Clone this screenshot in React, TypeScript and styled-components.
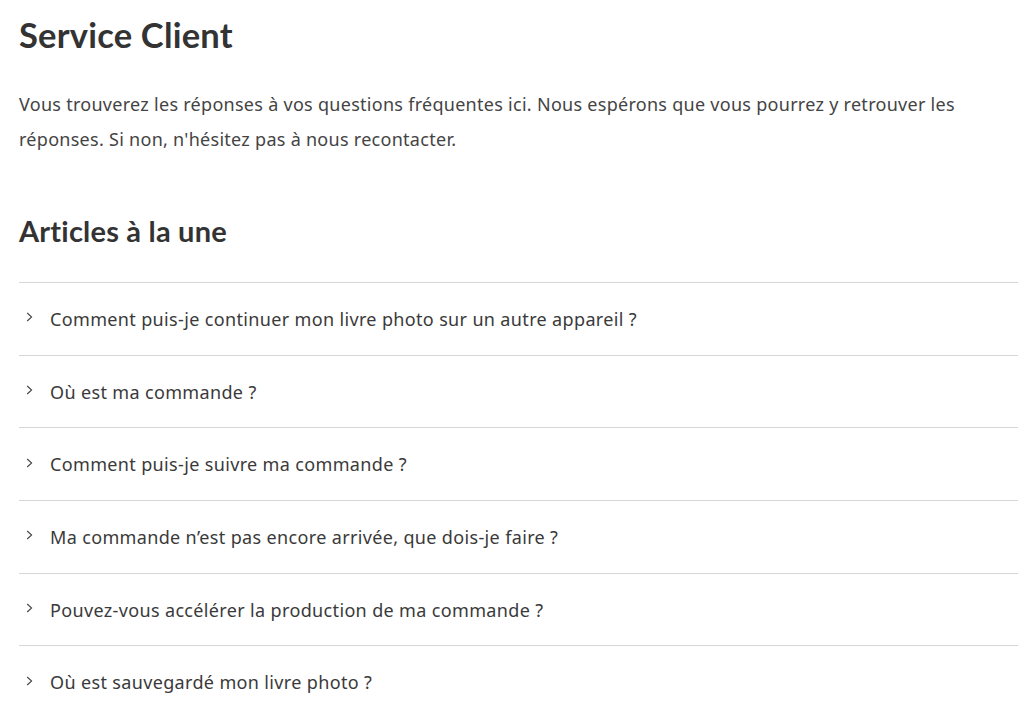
import React from "react";
import styled, { createGlobalStyle } from "styled-components";

const Global = createGlobalStyle`
  html, body { margin: 0; padding: 0; background: #ffffff; }
  body { font-family: "Noto Sans", "Lato", sans-serif; color: #3a3a3a; -webkit-font-smoothing: antialiased; }
  * { box-sizing: border-box; }
`;

const Page = styled.main`
  padding: 16px 6px 0 19px;
  height: 708px;
  overflow: hidden;
`;

const Title = styled.h1`
  margin: 0;
  font-family: "Lato", "Noto Sans", sans-serif;
  font-size: 34.5px;
  line-height: 38px;
  font-weight: 700;
  color: #333333;
  letter-spacing: 0.2px;
`;

const Intro = styled.p`
  margin: 33px 0 0;
  font-size: 18px;
  line-height: 35px;
  letter-spacing: 0.28px;
  color: #444444;
  max-width: 960px;
`;

const SectionTitle = styled.h2`
  margin: 58px 0 0;
  font-family: "Lato", "Noto Sans", sans-serif;
  font-size: 29px;
  line-height: 32px;
  font-weight: 700;
  color: #333333;
  letter-spacing: 0.2px;
`;

const List = styled.ul`
  list-style: none;
  margin: 35px 0 0;
  padding: 0;
`;

const Row = styled.li`
  display: flex;
  align-items: center;
  gap: 16px;
  height: 72.7px;
  border-top: 1px solid #d6d6d6;
  padding-left: 6px;
  font-size: 18px;
  letter-spacing: 0.35px;
  color: #3a3a3a;
`;

const Chevron = styled.svg`
  width: 9px;
  height: 10px;
  flex: none;
  margin-top: -3px;
`;

const items = [
  "Comment puis-je continuer mon livre photo sur un autre appareil ?",
  "Où est ma commande ?",
  "Comment puis-je suivre ma commande ?",
  "Ma commande n’est pas encore arrivée, que dois-je faire ?",
  "Pouvez-vous accélérer la production de ma commande ?",
  "Où est sauvegardé mon livre photo ?",
];

export default function App() {
  return (
    <>
      <Global />
      <Page>
        <Title>Service Client</Title>
        <Intro>
          Vous trouverez les réponses à vos questions fréquentes ici. Nous espérons que vous pourrez y retrouver les réponses. Si non, n'hésitez pas à nous recontacter.
        </Intro>
        <SectionTitle>Articles à la une</SectionTitle>
        <List>
          {items.map((t) => (
            <Row key={t}>
              <Chevron viewBox="0 0 9 10">
                <path d="M2.2 1 L6.6 5 L2.2 9" fill="none" stroke="#444" strokeWidth="1.1" />
              </Chevron>
              {t}
            </Row>
          ))}
        </List>
      </Page>
    </>
  );
}
